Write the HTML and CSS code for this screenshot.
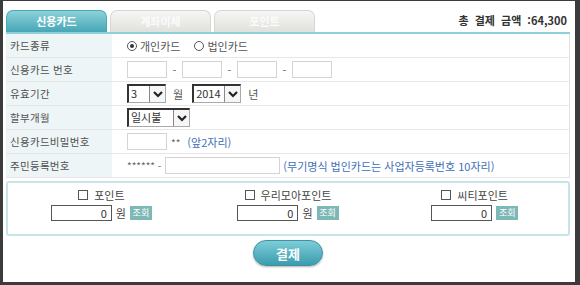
FILE: index.html
```html
<!DOCTYPE html>
<html lang="ko">
<head>
    <meta charset="UTF-8">
    <title>결제</title>
    <link rel="stylesheet" href="styles.css">
</head>
<body>
    <div class="frame">
        <div class="top-bar">
            <div class="tabs">
                <div class="tab active">신용카드</div>
                <div class="tab">계좌이체</div>
                <div class="tab">포인트</div>
            </div>
            <div class="total">총 결제 금액 :64,300</div>
        </div>

        <div class="pay-table">
            <div class="row">
                <div class="label">카드종류</div>
                <div class="value">
                    <label class="radio"><span class="dot checked"></span>개인카드</label>
                    <label class="radio"><span class="dot"></span>법인카드</label>
                </div>
            </div>
            <div class="row">
                <div class="label">신용카드 번호</div>
                <div class="value">
                    <span class="box w40"></span><span class="dash">-</span>
                    <span class="box w40"></span><span class="dash">-</span>
                    <span class="box w40"></span><span class="dash">-</span>
                    <span class="box w40"></span>
                </div>
            </div>
            <div class="row">
                <div class="label">유효기간</div>
                <div class="value">
                    <span class="select w38"><span class="sel-text">3</span><span class="arrow"><svg width="12" height="10" viewBox="0 0 12 10"><path d="M2 3 L6 7 L10 3" fill="none" stroke="#222" stroke-width="2.2"/></svg></span></span>
                    <span class="unit">월</span>
                    <span class="select w48"><span class="sel-text">2014</span><span class="arrow"><svg width="12" height="10" viewBox="0 0 12 10"><path d="M2 3 L6 7 L10 3" fill="none" stroke="#222" stroke-width="2.2"/></svg></span></span>
                    <span class="unit">년</span>
                </div>
            </div>
            <div class="row">
                <div class="label">할부개월</div>
                <div class="value">
                    <span class="select w63"><span class="sel-text">일시불</span><span class="arrow"><svg width="12" height="10" viewBox="0 0 12 10"><path d="M2 3 L6 7 L10 3" fill="none" stroke="#222" stroke-width="2.2"/></svg></span></span>
                </div>
            </div>
            <div class="row">
                <div class="label">신용카드비밀번호</div>
                <div class="value">
                    <span class="box w40"></span>
                    <span class="note"><span class="stars">**</span><span class="blue">(앞2자리)</span></span>
                </div>
            </div>
            <div class="row">
                <div class="label">주민등록번호</div>
                <div class="value">
                    <span class="stars">****** -</span>
                    <span class="box w115"></span>
                    <span class="blue">(무기명식 법인카드는 사업자등록번호 10자리)</span>
                </div>
            </div>
        </div>

        <div class="points">
            <div class="point">
                <div class="point-name"><span class="check"></span>포인트</div>
                <div class="point-input"><span class="num">0</span><span class="won">원</span><span class="lookup">조회</span></div>
            </div>
            <div class="point">
                <div class="point-name"><span class="check"></span>우리모아포인트</div>
                <div class="point-input"><span class="num">0</span><span class="won">원</span><span class="lookup">조회</span></div>
            </div>
            <div class="point">
                <div class="point-name"><span class="check"></span>씨티포인트</div>
                <div class="point-input"><span class="num">0</span><span class="lookup">조회</span></div>
            </div>
        </div>

        <div class="actions">
            <button class="pay-btn">결제</button>
        </div>
    </div>
</body>
</html>
```

FILE: styles.css
```css
* {
    margin: 0;
    padding: 0;
    box-sizing: border-box;
    font-family: "Noto Sans CJK KR", "Noto Sans", sans-serif;
}

body {
    background: #3b3b3b;
    width: 580px;
    height: 285px;
    overflow: hidden;
    padding: 1px 5px 3px 3px;
}

.frame {
    background: #fff;
    height: 281px;
    padding: 9px 5px 0 3px;
    font-size: 11px;
    color: #555;
}

.top-bar {
    display: flex;
    justify-content: space-between;
    align-items: center;
    border-bottom: 2px solid #8fd0d8;
}

.tabs {
    display: flex;
    gap: 3px;
}

.tab {
    width: 101px;
    height: 22px;
    line-height: 21px;
    text-align: center;
    font-size: 11px;
    font-weight: bold;
    color: #fbfbfb;
    border: 1px solid #d6d6d2;
    border-bottom: none;
    border-radius: 7px 7px 0 0;
    background: linear-gradient(#f6f6f4, #e0e0dc);
}

.tab.active {
    color: #fff;
    border-color: #4aa9b7;
    background: linear-gradient(#8cd2db, #46a7b6);
}

.total {
    font-size: 11px;
    font-weight: bold;
    color: #333;
    word-spacing: 3px;
    padding-right: 3px;
    padding-bottom: 2px;
}

.pay-table {
    border-right: 1px solid #e2e2e2;
}

.row {
    display: flex;
    height: 24px;
    border-bottom: 1px solid #e6e6e6;
}

.label {
    width: 106px;
    background: #eef5f6;
    padding-left: 4px;
    display: flex;
    align-items: center;
    font-size: 10.5px;
    letter-spacing: 0.3px;
    color: #505050;
}

.value {
    flex: 1;
    display: flex;
    align-items: center;
    padding-left: 15px;
}

.radio {
    display: flex;
    align-items: center;
    margin-right: 14px;
}

.dot {
    width: 10px;
    height: 10px;
    border: 1px solid #555;
    border-radius: 50%;
    margin-right: 3px;
    display: flex;
    align-items: center;
    justify-content: center;
}

.dot.checked::after {
    content: "";
    width: 4px;
    height: 4px;
    border-radius: 50%;
    background: #333;
}

.box {
    display: inline-block;
    height: 17px;
    border: 1px solid #d4d4d4;
    background: #fff;
}

.w40 { width: 40px; }
.w115 { width: 115px; }

.dash {
    width: 15px;
    text-align: center;
    color: #666;
}

.select {
    display: flex;
    height: 19px;
    border: 1px solid #aaa;
    border-top: 2px solid #333;
    border-left: 2px solid #333;
    background: #fff;
}

.w38 { width: 39px; }
.w48 { width: 49px; }
.w63 { width: 63px; }

.sel-text {
    flex: 1;
    font-size: 11px;
    line-height: 15px;
    padding-left: 2px;
    color: #333;
}

.arrow {
    width: 16px;
    border-left: 1px solid #888;
    background: #f6f6f6;
    display: flex;
    align-items: center;
    justify-content: center;
}

.unit {
    margin: 0 9px 0 7px;
}

.note {
    margin-left: 4px;
}

.stars {
    color: #666;
    font-size: 10px;
    margin-right: 4px;
}

.blue {
    color: #3d6fb8;
    margin-left: 3px;
}

.points {
    margin-top: 3px;
    height: 55px;
    border: 2px solid #c6e5e9;
    border-radius: 3px;
    display: grid;
    grid-template-columns: 1fr 1fr 1fr;
    padding-top: 3px;
}

.point {
    display: flex;
    flex-direction: column;
    align-items: center;
    gap: 1px;
}

.point-name {
    display: flex;
    align-items: center;
    height: 17px;
    color: #444;
}

.check {
    width: 10px;
    height: 10px;
    border: 1px solid #555;
    margin-right: 6px;
}

.point-input {
    display: flex;
    align-items: center;
    height: 17px;
}

.num {
    width: 61px;
    height: 16px;
    border: 1px solid #555;
    text-align: right;
    padding-right: 4px;
    line-height: 14px;
    color: #333;
}

.won {
    margin: 0 4px;
    color: #444;
}

.lookup {
    width: 22px;
    height: 14px;
    background: #7db8b6;
    color: #fff;
    font-size: 9px;
    line-height: 14px;
    text-align: center;
    margin-left: 4px;
}

.won + .lookup {
    margin-left: 0;
}

.actions {
    display: flex;
    justify-content: center;
    padding-top: 4px;
}

.pay-btn {
    width: 70px;
    height: 26px;
    border-radius: 13px;
    border: 1px solid #3b92a2;
    background: linear-gradient(#7ccdd8, #3b9cae);
    color: #fff;
    font-size: 13px;
    font-weight: bold;
    box-shadow: 0 1px 2px rgba(0, 0, 0, 0.3);
}
```
